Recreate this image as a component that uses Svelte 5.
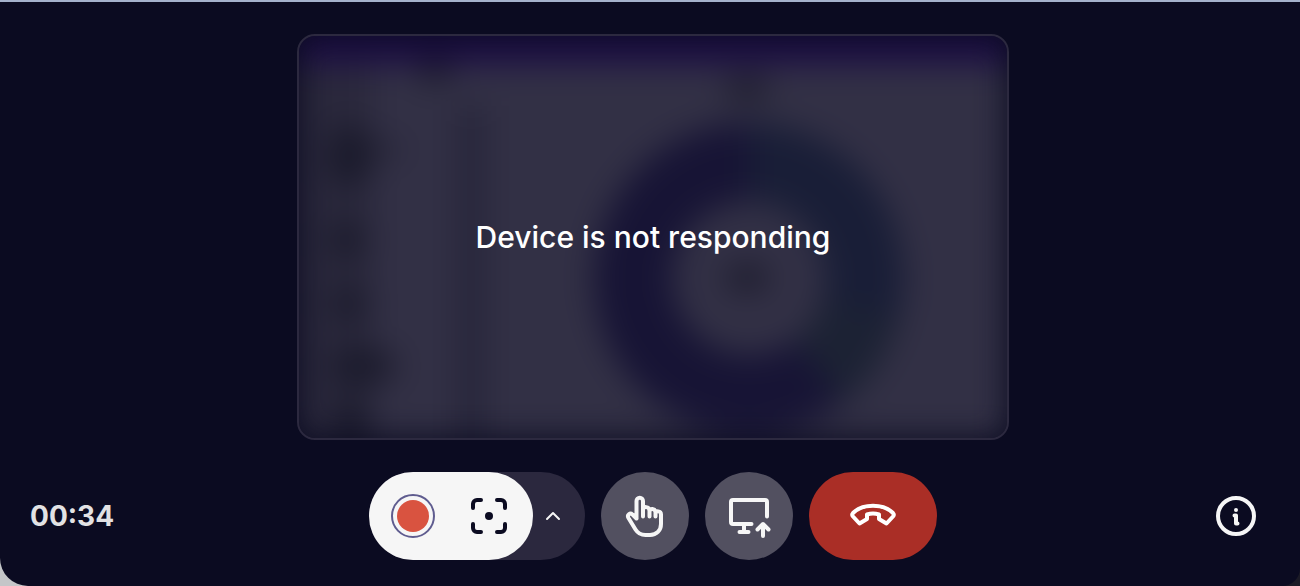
<script lang="ts">
  type Smudge = {
    x: number,
    y: number,
    rx: number,
    ry: number,
  }

  const smudges: Smudge[] = [
    { x: 136, y: 34, rx: 16, ry: 14 },
    { x: 448, y: 52, rx: 22, ry: 12 },
    { x: 448, y: 242, rx: 22, ry: 14 },
    { x: 50, y: 120, rx: 20, ry: 32 },
    { x: 84, y: 114, rx: 18, ry: 6 },
    { x: 48, y: 204, rx: 16, ry: 20 },
    { x: 50, y: 268, rx: 16, ry: 18 },
    { x: 64, y: 330, rx: 34, ry: 18 },
    { x: 52, y: 382, rx: 16, ry: 20 },
  ];

  let seconds = $state(34);
  let recording = $state(true);

  function formatTime(total: number) {
    const m = String(Math.floor(total / 60)).padStart(2, "0");
    const s = String(total % 60).padStart(2, "0");
    return `${m}:${s}`;
  }
</script>

<main class="panel">
  <section class="screen">
    <svg class="preview" viewBox="0 0 708 402" preserveAspectRatio="none" aria-hidden="true">
      <defs>
        <filter id="soft" x="-10%" y="-15%" width="120%" height="130%" color-interpolation-filters="sRGB">
          <feGaussianBlur stdDeviation="16" />
        </filter>
      </defs>
      <g filter="url(#soft)">
        <rect width="708" height="402" fill="#323045" />
        <rect y="30" width="74" height="372" fill="#2a283c" />
        <rect x="160" y="70" width="24" height="332" fill="#252439" />
        <rect width="708" height="28" fill="#1c0d45" />
        {#each smudges as s}
          <ellipse cx={s.x} cy={s.y} rx={s.rx} ry={s.ry} fill="#131222" fill-opacity="0.7" />
        {/each}
        <g fill="none" stroke-width="78">
          <circle cx="450" cy="242" r="116" stroke="#171435" />
          <path d="M450 126A116 116 0 0 1 562 272" stroke="#191e37" />
          <path d="M562 272A116 116 0 0 1 520 335" stroke="#1c2234" />
        </g>
      </g>
    </svg>
    <p class="message" role="status">Device is not responding</p>
  </section>

  <footer class="bar">
    <time class="timer">{formatTime(seconds)}</time>

    <div class="controls">
      <div class="capture">
        <div class="captureMain">
          <button
            class="record"
            type="button"
            aria-label="Record"
            aria-pressed={recording}
            onclick={() => (recording = !recording)}
          >
            <svg width="44" height="44" viewBox="0 0 44 44">
              <circle cx="22" cy="22" r="21" fill="none" stroke="#5f5c8f" stroke-width="2" />
              <circle cx="22" cy="22" r="16" fill="#d95340" />
            </svg>
          </button>
          <button class="shot" type="button" aria-label="Screenshot">
            <svg width="44" height="44" viewBox="0 0 44 44">
              <path
                class="line"
                d="M6 14v-4a4 4 0 0 1 4-4h4M30 6h4a4 4 0 0 1 4 4v4M38 30v4a4 4 0 0 1-4 4h-4M14 38h-4a4 4 0 0 1-4-4v-4"
              />
              <circle cx="22" cy="22" r="4" fill="currentColor" />
            </svg>
          </button>
        </div>
        <button class="more" type="button" aria-label="More capture options">
          <svg width="16" height="16" viewBox="0 0 16 16">
            <path class="line thin" d="M2 11l6-6 6 6" />
          </svg>
        </button>
      </div>

      <button class="round" type="button" aria-label="Touch control">
        <svg width="44" height="44" viewBox="0 0 44 44">
          <path
            class="line"
            d="M13.500 24.500V7a3.200 3.200 0 0 1 6.500 0V22.500M20 16c0-4 6.500-4 6.500 1v5.500M26.500 17.500c0-3.500 6-3.500 6 1v4M32.500 19.500c0-3 5.500-3 5.500 1V30c0 6.500-4.500 11-11 11h-4.500c-4.500 0-7.500-1.500-10-5.500L5.500 24c-1.800-3.200 1.500-5.500 4-3.500l4 4"
          />
        </svg>
      </button>

      <button class="round" type="button" aria-label="Share screen">
        <svg width="44" height="44" viewBox="0 0 44 44">
          <path
            class="line"
            d="M40 22.500V8a2 2 0 0 0-2-2H6a2 2 0 0 0-2 2v20a2 2 0 0 0 2 2h18.500M17 30v8M12.500 38h9M36 42V30.500M30.500 35.500l5.500-5.500 5.500 5.500"
          />
        </svg>
      </button>

      <button class="hangup" type="button" aria-label="End call">
        <svg width="48" height="48" viewBox="0 0 48 48">
          <path
            class="line"
            d="M10.500 31.500L4 24.500c-1-1.200-1-2.400 0-3.500C9 16 16 13.700 24 13.700s15 2.300 20 7.300c1 1.100 1 2.300 0 3.500l-6.500 7-7.500-4.500v-4.500c-4-1.300-8-1.300-12 0v4.500z"
          />
        </svg>
      </button>
    </div>

    <button class="info" type="button" aria-label="Session info">
      <svg width="40" height="40" viewBox="0 0 40 40">
        <circle class="line" cx="20" cy="20" r="18" />
        <circle cx="20" cy="14" r="2" fill="currentColor" />
        <path class="line" d="M18.500 19.500h1.500v8h1.500" />
      </svg>
    </button>
  </footer>
</main>

<style>
  :global(body) {
    background: linear-gradient(90deg, #c4c6c8 0, #c4c6c8 50%, #1b1a26 50%);
  }

  .panel {
    box-sizing: border-box;
    min-height: 100vh;
    padding: 32px 24px 26px 30px;
    display: flex;
    flex-direction: column;
    gap: 32px;
    background: #0b0b21;
    border-top: 2px solid #a5b2cc;
    border-radius: 0 0 18px 28px;
    font-family: Inter, "Liberation Sans", sans-serif;
    color: #f6f6f6;
  }

  .screen {
    box-sizing: border-box;
    position: relative;
    width: 100%;
    max-width: 712px;
    aspect-ratio: 712 / 406;
    margin: 0 auto;
    display: flex;
    align-items: center;
    justify-content: center;
    overflow: hidden;
    border: 2px solid #2c293f;
    border-radius: 18px;
  }

  .preview {
    position: absolute;
    inset: 0;
    width: 100%;
    height: 100%;
  }

  .message {
    position: relative;
    margin: 0;
    font-size: 30px;
    font-weight: 500;
    line-height: 40px;
    color: #fff;
  }

  .bar {
    display: grid;
    grid-template-columns: 1fr auto 1fr;
    align-items: center;
  }

  .timer {
    font-size: 28px;
    font-weight: 700;
    line-height: 40px;
    color: #e2e2e4;
  }

  .controls {
    display: flex;
    gap: 16px;
  }

  button {
    display: flex;
    align-items: center;
    justify-content: center;
    height: 88px;
    padding: 0;
    border: 0;
    background: none;
    color: inherit;
    cursor: pointer;
  }

  .line {
    fill: none;
    stroke: currentColor;
    stroke-width: 4;
    stroke-linecap: round;
    stroke-linejoin: round;
  }

  .thin {
    stroke-width: 2;
  }

  .capture {
    display: flex;
    border-radius: 44px;
    background: #2b283e;
  }

  .captureMain {
    display: flex;
    padding-right: 12px;
    border-radius: 44px;
    background: #f6f6f6;
    color: #0b0b21;
  }

  .record {
    width: 88px;
    border-radius: 44px;
  }

  .shot {
    width: 64px;
  }

  .more {
    width: 40px;
    margin-right: 12px;
  }

  .round {
    width: 88px;
    border-radius: 44px;
    background: #525060;
  }

  .hangup {
    width: 128px;
    border-radius: 44px;
    background: #aa2e26;
    color: #fff;
  }

  .info {
    width: 80px;
    justify-self: end;
  }
</style>
